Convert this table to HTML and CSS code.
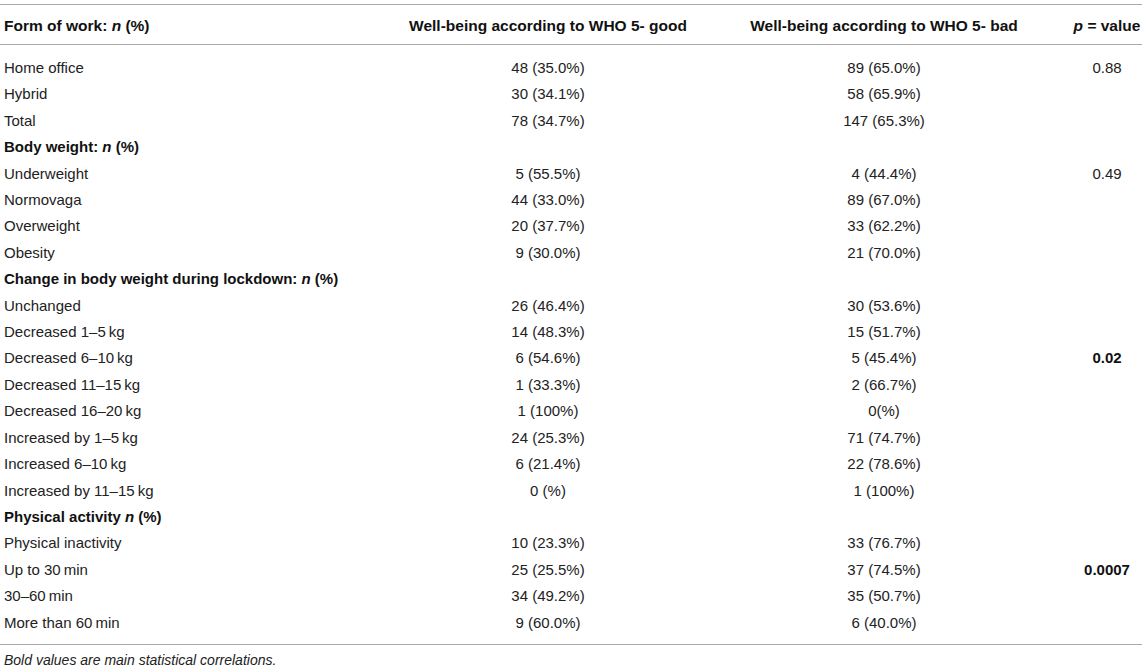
FILE: index.html
```html
<!DOCTYPE html>
<html lang="en">
<head>
    <meta charset="UTF-8">
    <title>Well-being table</title>
    <link rel="stylesheet" href="styles.css">
</head>
<body>
<table class="stats">
    <colgroup>
        <col class="c-label">
        <col class="c-good">
        <col class="c-bad">
        <col class="c-p">
    </colgroup>
    <thead>
        <tr>
            <th class="left">Form of work: <i>n</i> (%)</th>
            <th>Well-being according to WHO 5- good</th>
            <th>Well-being according to WHO 5- bad</th>
            <th><i>p</i> = value</th>
        </tr>
    </thead>
    <tbody>
        <tr class="first"><td>Home office</td><td>48 (35.0%)</td><td>89 (65.0%)</td><td>0.88</td></tr>
        <tr><td>Hybrid</td><td>30 (34.1%)</td><td>58 (65.9%)</td><td></td></tr>
        <tr><td>Total</td><td>78 (34.7%)</td><td>147 (65.3%)</td><td></td></tr>
        <tr class="group"><td colspan="4">Body weight: <i>n</i> (%)</td></tr>
        <tr><td>Underweight</td><td>5 (55.5%)</td><td>4 (44.4%)</td><td>0.49</td></tr>
        <tr><td>Normovaga</td><td>44 (33.0%)</td><td>89 (67.0%)</td><td></td></tr>
        <tr><td>Overweight</td><td>20 (37.7%)</td><td>33 (62.2%)</td><td></td></tr>
        <tr><td>Obesity</td><td>9 (30.0%)</td><td>21 (70.0%)</td><td></td></tr>
        <tr class="group"><td colspan="4">Change in body weight during lockdown: <i>n</i> (%)</td></tr>
        <tr><td>Unchanged</td><td>26 (46.4%)</td><td>30 (53.6%)</td><td></td></tr>
        <tr><td>Decreased 1–5&thinsp;kg</td><td>14 (48.3%)</td><td>15 (51.7%)</td><td></td></tr>
        <tr><td>Decreased 6–10&thinsp;kg</td><td>6 (54.6%)</td><td>5 (45.4%)</td><td><b>0.02</b></td></tr>
        <tr><td>Decreased 11–15&thinsp;kg</td><td>1 (33.3%)</td><td>2 (66.7%)</td><td></td></tr>
        <tr><td>Decreased 16–20&thinsp;kg</td><td>1 (100%)</td><td>0(%)</td><td></td></tr>
        <tr><td>Increased by 1–5&thinsp;kg</td><td>24 (25.3%)</td><td>71 (74.7%)</td><td></td></tr>
        <tr><td>Increased 6–10&thinsp;kg</td><td>6 (21.4%)</td><td>22 (78.6%)</td><td></td></tr>
        <tr><td>Increased by 11–15&thinsp;kg</td><td>0 (%)</td><td>1 (100%)</td><td></td></tr>
        <tr class="group"><td colspan="4">Physical activity <i>n</i> (%)</td></tr>
        <tr><td>Physical inactivity</td><td>10 (23.3%)</td><td>33 (76.7%)</td><td></td></tr>
        <tr><td>Up to 30&thinsp;min</td><td>25 (25.5%)</td><td>37 (74.5%)</td><td><b>0.0007</b></td></tr>
        <tr><td>30–60&thinsp;min</td><td>34 (49.2%)</td><td>35 (50.7%)</td><td></td></tr>
        <tr class="last"><td>More than 60&thinsp;min</td><td>9 (60.0%)</td><td>6 (40.0%)</td><td></td></tr>
    </tbody>
</table>
<p class="note">Bold values are main statistical correlations.</p>
</body>
</html>
```

FILE: styles.css
```css
body {
    margin: 0;
    padding: 4px 0 0 0;
    font-family: "Liberation Sans", Arial, sans-serif;
    color: #222;
    background: #fff;
}

.stats {
    width: 1142px;
    border-collapse: collapse;
    font-size: 15px;
    border-top: 1px solid #aaa;
    border-bottom: 1px solid #aaa;
}

.c-label { width: 400px; }
.c-good { width: 296px; }
.c-bad { width: 376px; }
.c-p { width: 70px; }

.stats th {
    font-weight: bold;
    font-size: 15.5px;
    text-align: center;
    height: 37px;
    padding: 2px 0 0 0;
    border-bottom: 1px solid #aaa;
    color: #111;
    white-space: nowrap;
}

.stats th.left {
    text-align: left;
    padding-left: 4px;
}

.stats td {
    padding: 0;
    line-height: 26.4px;
    text-align: center;
    white-space: nowrap;
}

.stats td:first-child {
    text-align: left;
    padding-left: 4px;
}

.stats tr.first td {
    padding-top: 10px;
}

.stats tr.last td {
    padding-bottom: 8px;
}

.stats tr.group td {
    font-weight: bold;
    color: #111;
}

.stats b {
    color: #111;
}

.note {
    margin: 0;
    padding: 7px 0 0 4px;
    font-size: 14px;
    font-style: italic;
    line-height: 16px;
}
```
